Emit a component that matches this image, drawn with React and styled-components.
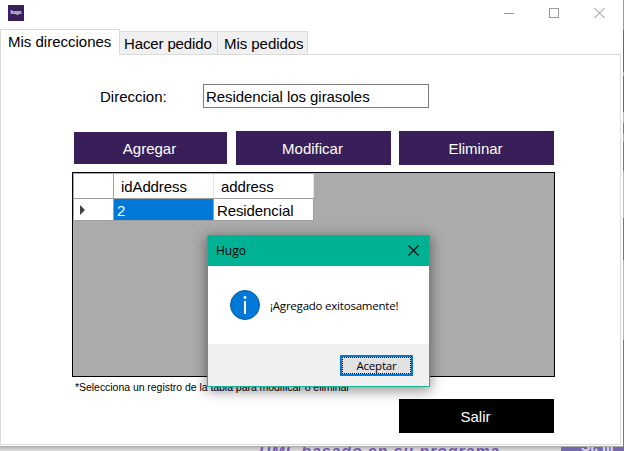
import React from "react";
import styled, { createGlobalStyle } from "styled-components";

const Global = createGlobalStyle`
  * { box-sizing: border-box; }
  body { margin: 0; overflow: hidden; background: #e2e2e2; }
  button, input { font: inherit; margin: 0; }
`;

const Desktop = styled.div`
  position: relative;
  width: 624px;
  height: 451px;
  overflow: hidden;
  display: grid;
  grid-template: 447px 4px / 623px 1px;
  background: #e2e2e2;
  color: #000;
  font: 15px/18px "Liberation Sans", Arial, sans-serif;
`;

const Window = styled.main`
  display: flex;
  flex-direction: column;
  background: #fff;
  border-bottom: 1px solid #aaa;
`;

const TitleBar = styled.header`
  display: flex;
  align-items: center;
  justify-content: space-between;
  height: 29px;
  padding: 0 18px 3px 8px;
`;

const Logo = styled.div`
  width: 16px;
  height: 16px;
  background: #3a205b;
  color: #fff;
  font: bold 4.5px/16px "Liberation Sans", sans-serif;
  text-align: center;
`;

const Controls = styled.div`
  display: flex;
  gap: 35px;
  svg { display: block; }
`;

const Tabs = styled.nav`
  display: flex;
  align-items: flex-end;
  height: 25px;
`;

const Tab = styled.div`
  width: ${(p) => p.$w}px;
  height: ${(p) => (p.$active ? 26 : 23)}px;
  margin-bottom: ${(p) => (p.$active ? -1 : 0)}px;
  padding: 3px 0 0 ${(p) => p.$pad}px;
  border: 1px solid #dadada;
  border-bottom: 0;
  border-left-width: ${(p) => (p.$active ? 1 : 0)}px;
  background: ${(p) => (p.$active ? "#fff" : "#f0f0f0")};
  letter-spacing: ${(p) => p.$ls || 0}px;
  white-space: nowrap;
  z-index: ${(p) => (p.$active ? 1 : 0)};
`;

const Page = styled.section`
  width: 621px;
  height: 391px;
  border: 1px solid #dadada;
  padding: 29px 66px 0 71px;
`;

const Field = styled.label`
  display: flex;
  align-items: center;
  gap: 36px;
  padding-left: 28px;
  span { width: 67px; white-space: nowrap; padding-top: 2px; }
`;

const Input = styled.input`
  width: 226px;
  height: 24px;
  padding: 0 2px 0;
  border: 1px solid #7a7a7a;
  border-radius: 0;
  outline: 0;
  background: #fff;
  color: #000;
  letter-spacing: -0.06px;
`;

const Actions = styled.div`
  display: flex;
  align-items: center;
  gap: 8px;
  margin: 23px 0 7px 2px;
`;

const ActionButton = styled.button`
  width: ${(p) => p.$w || 155}px;
  height: ${(p) => p.$h || 34}px;
  margin-right: ${(p) => p.$gap || 0}px;
  padding: 2px 2px 0 0;
  border: 0;
  background: ${(p) => (p.$dark ? "#000" : "#391f5a")};
  color: #fff;
`;

const Grid = styled.div`
  width: 483px;
  height: 205px;
  border: 1px solid #000;
  padding: 1px;
  background: #ababab;
`;

const Row = styled.div`
  display: grid;
  grid-template-columns: 40px 100px 100px;
  width: 240px;
  height: ${(p) => p.$h}px;
  background: #fff;
  border-bottom: 1px solid #a0a0a0;
`;

const Cell = styled.div`
  display: flex;
  align-items: center;
  padding: ${(p) => p.$top || 1}px 0 0 ${(p) => p.$pad || 3}px;
  border-right: 1px solid ${(p) => (p.$light ? "#e5e5e5" : "#a0a0a0")};
  background: ${(p) => (p.$selected ? "#0078d7" : "#fff")};
  color: ${(p) => (p.$selected ? "#fff" : "#000")};
  letter-spacing: -0.1px;
`;

const Note = styled.p`
  margin: 3px 0 0 3px;
  font-size: 10.5px;
  line-height: 14px;
  letter-spacing: -0.04px;
  white-space: nowrap;
`;

const ExitSlot = styled.div`
  display: flex;
  justify-content: flex-end;
  margin: 5px 0 0;
  width: 482px;
`;

const SideStrip = styled.div`
  background: linear-gradient(#999 0 30px, #67608c 30px 72px, #aaa 72px 76px, #67608c 76px 112px, #bbb 112px 123px, #77718f 123px 134px, #aaa 134px 142px, #77718f 142px 171px, #bbb 171px 218px, #77718f 218px 260px, #b8b8b8 260px 340px, #77718f 340px);
`;

const Behind = styled.div`
  display: flex;
  grid-column: 1 / 3;
  overflow: hidden;
  padding-left: 259px;
  background: linear-gradient(#bdbdbd, #dfdfdf);
  color: #7157b0;
  font: italic bold 16px/18px "Liberation Sans", sans-serif;
  span { width: 302px; white-space: nowrap; margin-top: -4px; letter-spacing: 0.87px; }
`;

const BehindPanel = styled.div`
  width: 63px;
  height: 5px;
  overflow: hidden;
  background: #7568ac;
  color: #dcd8ea;
  font: bold 14px/14px "Liberation Sans", sans-serif;
  padding-left: 20px;
  white-space: nowrap;
  b { display: block; margin-top: -8px; }
`;

const Dialog = styled.div`
  position: absolute;
  left: 207px;
  top: 235px;
  width: 223px;
  height: 152px;
  display: flex;
  flex-direction: column;
  border: 1px solid #19b399;
  background: #fff;
  box-shadow: 0 3px 12px 1px rgba(0, 0, 0, 0.42);
  font: 12px/16px "Open Sans", "Noto Sans", sans-serif;
`;

const DialogTitle = styled.div`
  display: flex;
  align-items: center;
  justify-content: space-between;
  height: 30px;
  padding: 0 10px 0 8px;
  background: #00b294;
  svg { display: block; margin-top: -2px; }
`;

const DialogBody = styled.div`
  display: flex;
  align-items: center;
  gap: 10px;
  height: 78px;
  padding-left: 22px;
  span { font-size: 11.5px; letter-spacing: -0.22px; padding-top: 2px; white-space: nowrap; }
`;

const DialogFooter = styled.div`
  display: flex;
  justify-content: flex-end;
  flex: 1;
  padding: 11px 16px 0 0;
  background: #f0f0f0;
`;

const Accept = styled.button`
  width: 73px;
  height: 21px;
  padding: 0;
  border: 2px solid #0078d7;
  border-radius: 0;
  background: #e1e1e1;
  color: #000;
  font-size: 11.5px;
  line-height: 15px;
  letter-spacing: -0.2px;
  span { display: block; height: 17px; border: 1px dotted #000; }
`;

export default function App() {
  return (
    <>
      <Global />
      <Desktop>
        <Window>
          <TitleBar>
            <Logo>hugo</Logo>
            <Controls>
              <svg width="10" height="10" shapeRendering="crispEdges"><path d="M0 5.5H10" stroke="#999" /></svg>
              <svg width="10" height="10" shapeRendering="crispEdges"><rect x=".5" y=".5" width="9" height="9" fill="none" stroke="#999" /></svg>
              <svg width="11" height="10"><path d="M.5 0L10.5 10M10.5 0L.5 10" stroke="#888" /></svg>
            </Controls>
          </TitleBar>
          <Tabs>
            <Tab $active $w={120} $pad={7}>Mis direcciones</Tab>
            <Tab $w={98} $pad={4} $ls={-0.13}>Hacer pedido</Tab>
            <Tab $w={90} $pad={6} $ls={-0.05}>Mis pedidos</Tab>
          </Tabs>
          <Page>
            <Field>
              <span>Direccion:</span>
              <Input defaultValue="Residencial los girasoles" />
            </Field>
            <Actions>
              <ActionButton $w={153} $h={32} $gap={1}>Agregar</ActionButton>
              <ActionButton>Modificar</ActionButton>
              <ActionButton>Eliminar</ActionButton>
            </Actions>
            <Grid>
              <Row $h={25}>
                <Cell />
                <Cell $pad={7} $light>idAddress</Cell>
                <Cell $pad={7} $light>address</Cell>
              </Row>
              <Row $h={22}>
                <Cell $pad={5}>
                  <svg width="6" height="10"><path d="M1 0V10L6 5Z" fill="#404040" /></svg>
                </Cell>
                <Cell $selected $top={3}>2</Cell>
                <Cell $pad={3} $top={3}>Residencial</Cell>
              </Row>
            </Grid>
            <Note>*Selecciona un registro de la tabla para modificar o eliminar</Note>
            <ExitSlot><ActionButton $dark>Salir</ActionButton></ExitSlot>
          </Page>
        </Window>
        <SideStrip />
        <Behind>
          <span>UML basado en su programa</span>
          <BehindPanel><b>SI, III</b></BehindPanel>
        </Behind>
        <Dialog role="dialog">
          <DialogTitle>
            Hugo
            <svg width="11" height="11"><path d="M.5 .5L10.5 10.5M10.5 .5L.5 10.5" stroke="#000" strokeWidth="1.1" /></svg>
          </DialogTitle>
          <DialogBody>
            <svg width="30" height="30">
              <circle cx="15" cy="15" r="14.5" fill="#0078d7" stroke="#075a9e" />
              <path d="M15 11V24" stroke="#fff" strokeWidth="2" />
              <circle cx="15" cy="7.5" r="1.4" fill="#fff" />
            </svg>
            <span>¡Agregado exitosamente!</span>
          </DialogBody>
          <DialogFooter><Accept><span>Aceptar</span></Accept></DialogFooter>
        </Dialog>
      </Desktop>
    </>
  );
}
